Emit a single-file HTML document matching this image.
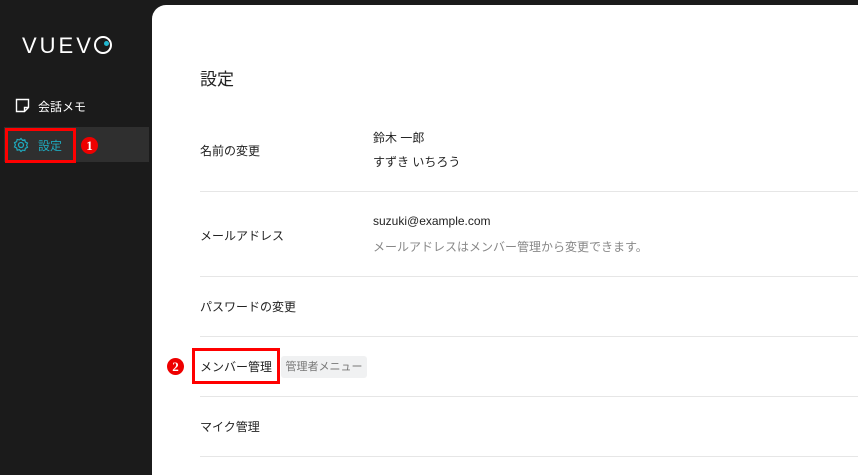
<!DOCTYPE html><html><head><meta charset="utf-8"><style>
html,body{margin:0;width:858px;height:464px}
body{background:#1b1b1b;font-family:"Liberation Sans","Noto Sans CJK JP",sans-serif;position:relative;overflow:hidden}
.a{position:absolute}
.main{left:152px;top:5px;width:720px;height:470px;background:#fff;border-top-left-radius:14px}
.lbl{left:200px;font-size:12px;color:#222}
.val{left:373px;font-size:12px;color:#222}
.hr{left:200px;width:658px;height:1px;background:#e6e6e6}
.num{width:17px;height:17px;border-radius:50%;background:#e00;color:#fff;font-size:13px;font-weight:bold;text-align:center;line-height:17px;font-family:"Liberation Serif",serif}
</style></head><body>
<div class="a" style="left:22px;top:33px;color:#fff;font-size:22px;letter-spacing:3px;font-weight:300">VUEV<span style="display:inline-block;width:14px;height:14px;border:2px solid #fff;border-radius:50%;position:relative;top:1px"><span style="position:absolute;left:8px;top:3px;width:5px;height:5px;background:#22b8d0;border-radius:50%"></span></span></div>
<svg class="a" style="left:15px;top:98px" width="15" height="15" viewBox="0 0 15 15"><path d="M1.5 1.5h12v8l-4 4h-8z M9.5 13.5v-4h4" fill="none" stroke="#fff" stroke-width="1.4"/></svg>
<div class="a" style="left:38px;top:98px;color:#fff;font-size:12px">会話メモ</div>
<div class="a" style="left:4px;top:127px;width:145px;height:35px;background:#2f2f2f"></div>
<div class="a" style="left:5px;top:128px;width:65px;height:29px;border:3px solid #f00"></div>
<svg class="a" style="left:13px;top:137px" width="16" height="16" viewBox="0 0 16 16"><circle cx="8" cy="8" r="2.5" fill="none" stroke="#1fa9bd" stroke-width="1.3"/><path d="M8 1.5l1.5 1.8 2.3-.5.6 2.3 2.1 1-.9 2.1.9 2.1-2.1 1-.6 2.3-2.3-.5L8 14.5l-1.5-1.8-2.3.5-.6-2.3-2.1-1 .9-2.1-.9-2.1 2.1-1 .6-2.3 2.3.5z" fill="none" stroke="#1fa9bd" stroke-width="1.2"/></svg>
<div class="a" style="left:38px;top:137px;color:#1fa9bd;font-size:12px">設定</div>
<div class="a num" style="left:81px;top:137px">1</div>
<div class="a main"></div>
<div class="a" style="left:200px;top:65px;font-size:17px;color:#222">設定</div>
<div class="a lbl" style="top:142px">名前の変更</div>
<div class="a val" style="top:129px">鈴木 一郎</div>
<div class="a val" style="top:153px">すずき いちろう</div>
<div class="a hr" style="top:191px"></div>
<div class="a lbl" style="top:227px">メールアドレス</div>
<div class="a val" style="top:214px">suzuki@example.com</div>
<div class="a val" style="top:238px;color:#888">メールアドレスはメンバー管理から変更できます。</div>
<div class="a hr" style="top:276px"></div>
<div class="a lbl" style="top:298px">パスワードの変更</div>
<div class="a hr" style="top:336px"></div>
<div class="a num" style="left:167px;top:358px">2</div>
<div class="a" style="left:192px;top:348px;width:82px;height:30px;border:3px solid #f00;background:#fff"></div>
<div class="a lbl" style="top:358px">メンバー管理</div>
<div class="a" style="left:281px;top:356px;width:86px;height:22px;background:#f0f1f2;border-radius:3px;color:#777;font-size:11px;line-height:22px;text-align:center">管理者メニュー</div>
<div class="a hr" style="top:396px"></div>
<div class="a lbl" style="top:418px">マイク管理</div>
<div class="a hr" style="top:456px"></div>
</body></html>
